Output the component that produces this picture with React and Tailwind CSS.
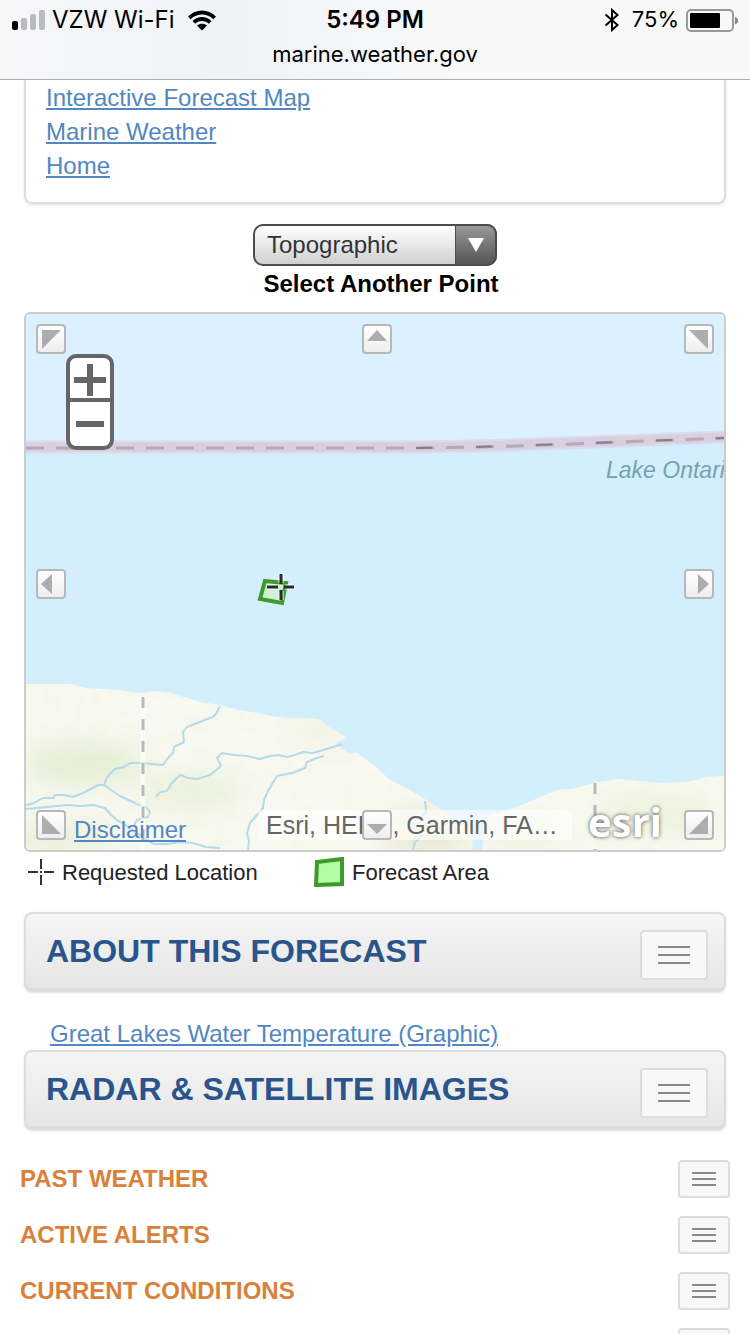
import React from 'react'
import clsx from 'clsx'

const quickLinks = ['Interactive Forecast Map', 'Marine Weather', 'Home']

const sideMenus = ['PAST WEATHER', 'ACTIVE ALERTS', 'CURRENT CONDITIONS', 'FORECASTS']

// pan controls around the edge of the map
const panButtons = [
    { label: 'Pan north west', place: 'left-2.5 top-2.5', points: '6,6 25,6 6,25' },
    { label: 'Pan north', place: 'left-[calc(50%-13px)] top-2.5', points: '15,6 25,17 5,17' },
    { label: 'Pan north east', place: 'right-2.5 top-2.5', points: '5,6 24,6 24,25' },
    { label: 'Pan west', place: 'left-2.5 top-[calc(50%-13px)]', points: '5,15 16,5 16,25' },
    { label: 'Pan east', place: 'right-2.5 top-[calc(50%-13px)]', points: '25,15 14,5 14,25' },
    { label: 'Pan south west', place: 'left-2.5 bottom-2.5', points: '6,5 25,24 6,24' },
    { label: 'Pan south', place: 'left-[calc(50%-13px)] bottom-2.5', points: '15,24 25,14 5,14' },
    { label: 'Pan south east', place: 'right-2.5 bottom-2.5', points: '24,5 24,24 5,24' },
]

function StatusBar() {
    return (
        <header className="h-20 shrink-0 border-b border-[#acacac] bg-linear-to-r from-[#f7f7f8] via-[#eff3f9] via-30% to-[#f8f8f8] to-60% font-['Inter',sans-serif] text-black">
            <div className="grid grid-cols-3 items-center h-10 px-3 text-2xl">
                <div className="flex items-center">
                    <svg width="34" height="20" viewBox="0 0 34 20" aria-hidden="true">
                        <rect x="0" y="11" width="6" height="9" rx="2" fill="#000" />
                        <rect x="9" y="8" width="6" height="12" rx="2" fill="#b9babc" />
                        <rect x="18" y="4" width="6" height="16" rx="2" fill="#b9babc" />
                        <rect x="27" y="0" width="6" height="20" rx="2" fill="#b9babc" />
                    </svg>
                    <span className="ml-1.5 whitespace-nowrap">VZW Wi-Fi</span>
                    <svg className="ml-3" width="30" height="22" viewBox="0 0 30 22" aria-hidden="true">
                        <path d="M1 7.5C9 -.5 21 -.5 29 7.5L26.300 10.200C20 4 10 4 3.700 10.200Z" />
                        <path d="M5.500 12C11 6.700 19 6.700 24.500 12L21.800 14.700C18 11.200 12 11.200 8.200 14.700Z" />
                        <path d="M10 16.500C13 14 17 14 20 16.500L15 21.500Z" />
                    </svg>
                </div>
                <span className="text-center font-semibold">5:49 PM</span>
                <div className="flex items-center justify-end text-[22px]">
                    <svg width="16" height="24" viewBox="0 0 16 24" fill="none" stroke="#000" strokeWidth="2" aria-hidden="true">
                        <path d="M1.500 6.500L13.500 17L8 22V2L13.500 7L1.500 17.500" />
                    </svg>
                    <span className="ml-3">75%</span>
                    <svg className="ml-1.5" width="53" height="24" viewBox="0 0 53 24" aria-hidden="true">
                        <rect x="2" y="2" width="46" height="21" rx="4" fill="none" stroke="#97989a" strokeWidth="2" />
                        <rect x="5" y="5" width="30" height="15" rx="1" />
                        <path d="M50 9C54 10 54 15 50 16.500Z" fill="#808183" />
                    </svg>
                </div>
            </div>
            <p className="h-7 text-center text-[22px] leading-7">marine.weather.gov</p>
        </header>
    )
}

function MenuToggle({ label, small }) {
    return (
        <button
            type="button"
            aria-label={`Toggle ${label}`}
            className={clsx(
                'flex flex-col items-center justify-center rounded-sm border-2 border-[#ddd] bg-[#f8f8f8]',
                small ? 'h-[38px] w-[52px] gap-1' : 'h-[50px] w-[68px] gap-1.5',
            )}
        >
            {[0, 1, 2].map((bar) => (
                <span key={bar} className={clsx('h-0.5 bg-[#888]', small ? 'w-6' : 'w-8')} />
            ))}
        </button>
    )
}

function PanelHeading({ title }) {
    return (
        <div className="flex h-20 justify-between rounded-lg border-2 border-b-4 border-[#ddd] bg-linear-to-b from-[#f5f5f5] to-[#e6e6e6] pl-5 pr-4 shadow-sm">
            <h2 className="self-center text-[32px] leading-9 font-bold text-[#2a558c]">{title}</h2>
            <div className="pt-4">
                <MenuToggle label={title} />
            </div>
        </div>
    )
}

function LakeMap() {
    return (
        <svg className="absolute inset-0 h-full w-full" viewBox="0 0 698 536" preserveAspectRatio="xMidYMid slice" role="img" aria-label="Map of the southern shore of Lake Ontario">
            <defs>
                <clipPath id="land">
                    <path d="M0 370L20 370L44 370L60 374L77 375L94 376L114 379L128 377L141 378L158 383L174 388L194 391L212 396L227 398L245 402L261 404L278 404L292 405L306 415L320 423L310 429L314 433L322 439L331 439L348 451L364 466L382 475L399 485L414 495L432 507L444 514L447 536H0Z" />
                    <path d="M456 536L459 514L464 501L491 493L512 484L531 476L545 475L567 469L594 465L614 467L631 469L661 468L681 463L698 462V536Z" />
                </clipPath>
                <filter id="soft" x="-50%" y="-50%" width="200%" height="200%">
                    <feGaussianBlur stdDeviation="14" />
                </filter>
                <filter id="terrain" x="0" y="0" width="100%" height="100%">
                    <feTurbulence type="fractalNoise" baseFrequency="0.06" numOctaves="3" seed="4" />
                    <feColorMatrix values="0 0 0 0 .88  0 0 0 0 .9  0 0 0 0 .76  2 0 0 0 -.8" />
                </filter>
            </defs>

            <rect width="698" height="536" fill="#d3eefd" />
            <path d="M0 0H698V123C620 128 540 129 474 131C430 133 380 133 0 133Z" fill="#dbf1ff" />

            {/* US / Canada border */}
            <path d="M0 133H370C470 133 560 128 698 123" fill="none" stroke="#dcdbea" strokeWidth="13" />
            <path d="M0 133H370C470 133 560 128 698 123" fill="none" stroke="#d8cfdf" strokeWidth="9" />
            <path d="M0 134H370C470 134 560 129 698 124" fill="none" stroke="#b3a9b9" strokeWidth="3" strokeDasharray="18 12" />
            <path d="M390 134C480 133 560 129 698 124" fill="none" stroke="#857f8b" strokeWidth="2" strokeDasharray="16 44" />

            <g clipPath="url(#land)">
                <rect y="360" width="698" height="176" fill="#f8f9f1" />
                <g filter="url(#soft)">
                    <ellipse cx="58" cy="450" rx="62" ry="20" fill="#e3edd0" />
                    <ellipse cx="165" cy="478" rx="55" ry="16" fill="#e8f0d8" />
                    <ellipse cx="30" cy="525" rx="60" ry="16" fill="#e8f0d8" />
                    <ellipse cx="300" cy="415" rx="40" ry="12" fill="#f0f3e0" />
                    <ellipse cx="400" cy="520" rx="44" ry="24" fill="#e9e9d4" />
                    <ellipse cx="630" cy="500" rx="60" ry="18" fill="#ebf2d9" />
                    <ellipse cx="500" cy="520" rx="40" ry="14" fill="#edf3dc" />
                </g>
                <rect y="360" width="698" height="176" filter="url(#terrain)" opacity=".4" />
            </g>

            <g fill="none" stroke="#b3dbea" strokeWidth="2" strokeLinejoin="round">
                <path d="M194 392L190 400L187 403L176 407L161 413L157 418L158 428L148 433L147 439L141 445L137 451L126 450L117 449L104 449L98 453L89 455L81 463L78 471L72 471L57 479L47 483L38 481L29 481L27 484L17 484L8 489L0 491" />
                <path d="M78 471L94 482L111 490L120 493L124 498L122 503L111 506L107 513" />
                <path d="M0 495L21 493L41 491L55 492L67 491L79 494L85 501L91 506L104 514L121 526L128 530L141 530L155 528L167 529L180 533L194 534" />
                <path d="M130 483L134 478L141 477L146 469L154 461L162 464L171 465L184 461L194 453L195 451L191 444L196 439L208 441L221 442L234 445L244 442L253 441L261 443L269 441L277 438L287 439L304 434L316 430" />
                <path d="M298 442L291 444L281 448L279 454L266 459L251 462L246 470L241 479L238 486L237 494L224 509L221 519L223 527L222 536" />
                <path d="M399 487L400 497L394 506M397 521L389 528L387 536" />
            </g>
            <path d="M117 382V536" stroke="#fff" strokeOpacity=".6" strokeWidth="5" />
            <path d="M117 383V536M569 469V536" stroke="#b9b9b9" strokeWidth="3" strokeDasharray="11 11" />

            <text x="580" y="164" fontSize="23" fontStyle="italic" fontFamily="Liberation Sans, sans-serif" fill="#75a3ad">Lake Ontario</text>

            {/* forecast area and the requested point */}
            <path d="M239 267L260 269L256 289L234 285Z" fill="#cdf2d9" stroke="#3f9a28" strokeWidth="4" />
            <path d="M241 273H251M259 273H268M255 260V269M255 277V286" stroke="#fff" strokeOpacity=".5" strokeWidth="6" />
            <path d="M241 273H252M258 273H268M255 260V270M255 276V286" stroke="#2b2b2b" strokeWidth="3" />
        </svg>
    )
}

function ForecastMap() {
    return (
        <div className="relative h-[540px] overflow-hidden rounded-md border-2 border-[#ccc] text-2xl">
            <LakeMap />

            <div className="absolute left-10 top-10 flex h-24 w-12 flex-col overflow-hidden rounded-[10px] border-4 border-[#666] bg-white">
                <button type="button" aria-label="Zoom in" className="flex h-10 items-center justify-center pt-1">
                    <svg width="32" height="32" viewBox="0 0 32 32" stroke="#666" strokeWidth="6">
                        <path d="M0 16H32M16 0V32" />
                    </svg>
                </button>
                <button type="button" aria-label="Zoom out" className="flex flex-1 items-center justify-center border-t-4 border-[#666]">
                    <svg width="28" height="6" viewBox="0 0 28 6">
                        <rect width="28" height="6" fill="#666" />
                    </svg>
                </button>
            </div>

            <a href="#disclaimer" className="absolute bottom-1 left-12 leading-8 text-[#5287c1] underline">Disclaimer</a>
            <p className="absolute bottom-2.5 left-[232px] h-[30px] w-[314px] overflow-hidden whitespace-nowrap bg-white/60 pl-2 text-[25px] leading-[30px] text-[#666]">Esri, HERE, Garmin, FA…</p>
            <span className="absolute bottom-1 right-[62px] font-['Open_Sans',sans-serif] text-[40px] leading-[48px] font-bold text-white [text-shadow:0_0_4px_#777,0_0_3px_#999]">esri</span>

            {panButtons.map(({ label, place, points }) => (
                <button
                    key={label}
                    type="button"
                    aria-label={label}
                    className={clsx('absolute size-[30px] rounded-sm border-2 border-[#b8b8b8] bg-linear-to-b from-white to-[#eee]', place)}
                >
                    <svg className="-m-0.5" width="30" height="30" viewBox="0 0 30 30">
                        <polygon points={points} fill="#adadad" />
                    </svg>
                </button>
            ))}
        </div>
    )
}

function MapLegend() {
    return (
        <div className="mb-5 flex h-10 items-center text-[22px] text-[#222]">
            <div className="flex w-[290px] items-center gap-2 pl-1">
                <svg width="26" height="26" viewBox="0 0 26 26" stroke="#333" strokeWidth="2">
                    <path d="M0 13H10M16 13H26M13 0V10M13 16V26M12 13H14" />
                </svg>
                <span>Requested Location</span>
            </div>
            <div className="flex items-center gap-2">
                <svg width="30" height="30" viewBox="0 0 30 30">
                    <path d="M3 5L28 2V27L2 28Z" fill="#b4fca6" stroke="#3b9a28" strokeWidth="4" />
                </svg>
                <span>Forecast Area</span>
            </div>
        </div>
    )
}

function App() {
    return (
        <div className="flex h-screen flex-col overflow-hidden bg-white font-['Liberation_Sans',Arial,sans-serif]">
            <StatusBar />
            <main className="min-h-0 flex-1 overflow-hidden">
                <div className="px-6">
                    <nav className="rounded-b-lg border-2 border-t-0 border-[#ddd] px-5 pt-px pb-[19px] shadow-sm">
                        <ul>
                            {quickLinks.map((link) => (
                                <li key={link} className="text-2xl leading-[34px]">
                                    <a href="#top" className="text-[#5287c1] underline">{link}</a>
                                </li>
                            ))}
                        </ul>
                    </nav>

                    <div className="mt-5 flex flex-col items-center">
                        <div className="relative h-[42px] w-[244px]">
                            <select aria-label="Base map" defaultValue="Topographic" className="h-full w-full appearance-none rounded-[10px] border-2 border-[#4c4c4c] bg-linear-to-b from-white to-[#d0d0d0] pl-3 text-2xl text-[#333]">
                                <option>Topographic</option>
                                <option>Streets</option>
                                <option>Satellite</option>
                            </select>
                            <span className="pointer-events-none absolute inset-y-0 right-0 flex w-[42px] items-center justify-center rounded-r-[10px] border-2 border-l border-[#4c4c4c] bg-linear-to-b from-[#999] to-[#555]">
                                <svg width="16" height="14" viewBox="0 0 16 14">
                                    <path d="M0 0H16L8 14Z" fill="#fff" />
                                </svg>
                            </span>
                        </div>
                        <p className="mb-2.5 pl-3 text-2xl leading-9 font-bold">Select Another Point</p>
                    </div>

                    <ForecastMap />
                    <MapLegend />
                    <PanelHeading title="ABOUT THIS FORECAST" />
                    <p className="px-[26px] pt-[26px] text-2xl leading-8">
                        <a href="#temperature" className="text-[#5287c1] underline">Great Lakes Water Temperature (Graphic)</a>
                    </p>
                    <PanelHeading title="RADAR & SATELLITE IMAGES" />
                </div>

                <ul className="space-y-[18px] px-5 pt-[30px]">
                    {sideMenus.map((menu) => (
                        <li key={menu} className="flex h-[38px] items-center justify-between">
                            <h3 className="text-2xl font-bold text-[#d9813a]">{menu}</h3>
                            <MenuToggle label={menu} small />
                        </li>
                    ))}
                </ul>
            </main>
        </div>
    )
}

export default App
